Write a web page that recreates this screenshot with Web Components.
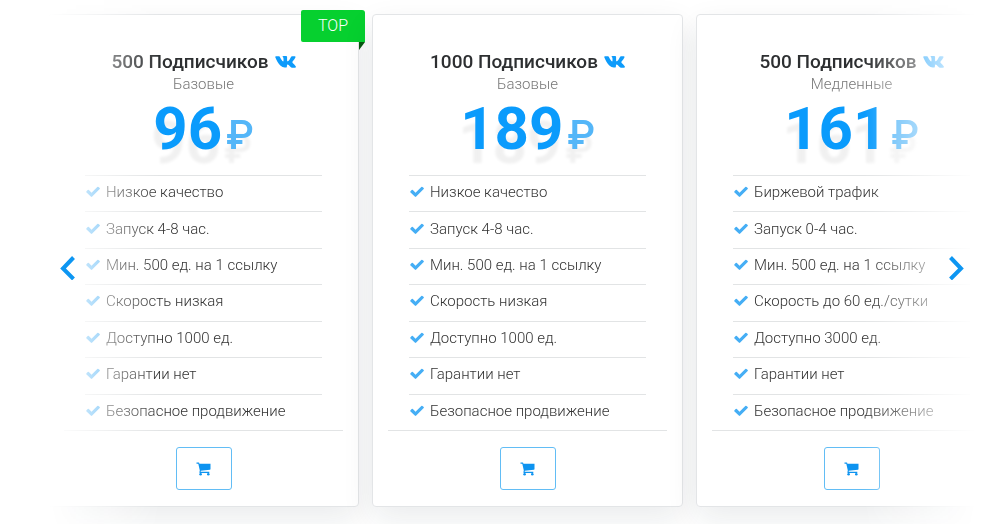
<!DOCTYPE html>
<html lang="ru">
<head>
<meta charset="utf-8">
<meta name="viewport" content="width=device-width, initial-scale=1">
<title>Тарифы</title>
<style>
  body { margin: 0; background: #fff; font-family: Roboto, "Liberation Sans", sans-serif; color: #444; }
</style>
</head>
<body>
<price-carousel>
  <price-card name="500 Подписчиков" kind="Базовые" price="96" badge="TOP">
    <price-feature>Низкое качество</price-feature>
    <price-feature>Запуск 4-8 час.</price-feature>
    <price-feature>Мин. 500 ед. на 1 ссылку</price-feature>
    <price-feature>Скорость низкая</price-feature>
    <price-feature>Доступно 1000 ед.</price-feature>
    <price-feature>Гарантии нет</price-feature>
    <price-feature>Безопасное продвижение</price-feature>
  </price-card>
  <price-card name="1000 Подписчиков" kind="Базовые" price="189">
    <price-feature>Низкое качество</price-feature>
    <price-feature>Запуск 4-8 час.</price-feature>
    <price-feature>Мин. 500 ед. на 1 ссылку</price-feature>
    <price-feature>Скорость низкая</price-feature>
    <price-feature>Доступно 1000 ед.</price-feature>
    <price-feature>Гарантии нет</price-feature>
    <price-feature>Безопасное продвижение</price-feature>
  </price-card>
  <price-card name="500 Подписчиков" kind="Медленные" price="161">
    <price-feature>Биржевой трафик</price-feature>
    <price-feature>Запуск 0-4 час.</price-feature>
    <price-feature>Мин. 500 ед. на 1 ссылку</price-feature>
    <price-feature>Скорость до 60 ед./сутки</price-feature>
    <price-feature>Доступно 3000 ед.</price-feature>
    <price-feature>Гарантии нет</price-feature>
    <price-feature>Безопасное продвижение</price-feature>
  </price-card>
</price-carousel>

<script>
class PriceCarousel extends HTMLElement {
  constructor() {
    super();
    this.attachShadow({ mode: 'open' }).innerHTML = `
      <style>
        :host { display: block; position: relative; padding: 0 22px 0 48px; }
        .view {
          overflow: hidden; padding: 14px 0 17px;
          -webkit-mask-image: linear-gradient(to right, transparent, #000 112px, #000 calc(100% - 112px), transparent);
          mask-image: linear-gradient(to right, transparent, #000 112px, #000 calc(100% - 112px), transparent);
        }
        .track { display: grid; grid-template-columns: repeat(3, 1fr); gap: 13px; margin-right: -31px; }
        button {
          position: absolute; top: 256px; width: 16px; height: 24px; padding: 0;
          border: 0; background: none; cursor: pointer;
        }
        .prev { left: 60px; }
        .next { right: 34px; }
        svg { display: block; width: 16px; height: 24px; fill: none; stroke: #0d96f2; stroke-width: 4; }
      </style>
      <div class="view"><div class="track"><slot></slot></div></div>
      <button class="prev" aria-label="Назад"><svg viewBox="0 0 16 24"><path d="M13.5 1.5 3 12.500 13.500 23"/></svg></button>
      <button class="next" aria-label="Вперёд"><svg viewBox="0 0 16 24"><path d="M2.500 1.500 13 12.500 2.500 23"/></svg></button>`;
  }
}

class PriceFeature extends HTMLElement {
  constructor() {
    super();
    this.attachShadow({ mode: 'open' }).innerHTML = `
      <style>
        :host { display: flex; align-items: center; gap: 6px; padding: 0 1px 3px; border-top: 1px solid #e2e4e5; font-size: 15px; font-weight: 300; line-height: 20px; color: #333; }
        svg { width: 14px; height: 12px; flex: none; fill: #45aef5; }
      </style>
      <svg viewBox="0 0 14 12" aria-hidden="true"><path d="M13.700 2.900 6.200 10.600Q5.500 11.200 4.800 10.600L.5 6.500Q0 5.900.5 5.300L1.700 4.100Q2.300 3.600 2.900 4.100L5.500 6.700 11.300.9Q11.900.4 12.500.9L13.700 2Q14.100 2.500 13.700 2.900Z"/></svg>
      <span><slot></slot></span>`;
  }
}

class PriceCard extends HTMLElement {
  connectedCallback() {
    if (this.shadowRoot) return;
    const badge = this.getAttribute('badge');
    this.attachShadow({ mode: 'open' }).innerHTML = `
      <style>
        :host {
          display: flex; flex-direction: column; align-items: stretch; position: relative; box-sizing: border-box;
          padding: 35px 15px 16px; background: #fff; border: 1px solid #e3e5e7; border-radius: 4px;
          box-shadow: 0 12px 32px rgba(20, 40, 50, .09); text-align: center;
        }
        h2 { display: flex; justify-content: center; align-items: center; gap: 6px; margin: 0; font-size: 19px; font-weight: 500; line-height: 24px; color: #2d2f31; }
        .vk { width: 21px; height: 12px; fill: #0d9bfb; }
        .kind { margin: 0; font-size: 15px; font-weight: 300; line-height: 20px; color: #777; }
        .price { margin: 0 0 11px; font-size: 60px; font-weight: 700; line-height: 70px; color: #0a9bfc; text-shadow: -2px 14px 3px rgba(0, 0, 0, .06); }
        .price small { margin-left: 4px; font-size: 40px; font-weight: 500; line-height: 40px; color: #54b6f8; }
        .list { display: grid; grid-auto-rows: 1fr; min-height: 255px; margin: 0 21px; }
        .foot { border-top: 1px solid #e2e4e5; padding-top: 16px; }
        button { display: inline-flex; align-items: center; justify-content: center; width: 56px; height: 43px; padding: 0; border: 1px solid #62bdf5; border-radius: 3px; background: #fff; cursor: pointer; vertical-align: top; }
        .cart { width: 15px; height: 14px; fill: #0d93f0; }
        .badge { position: absolute; top: -5px; right: -7px; width: 64px; border-radius: 2px 3px 0 2px; background: #06d02f; color: #fff; font-size: 16px; font-weight: 300; line-height: 32px; }
        .badge::after { content: ""; position: absolute; right: 0; top: 100%; border-top: 8px solid #07570f; border-right: 6px solid transparent; }
      </style>
      ${badge ? `<div class="badge">${badge}</div>` : ''}
      <h2><span>${this.getAttribute('name')}</span>
        <svg class="vk" viewBox="0 0 21 12" aria-hidden="true"><path d="M10 11.600H11.300Q11.900 11.500 11.900 10.500C11.900 8.300 12.700 8 13.700 9.100C15 10.600 15.700 11.700 17.200 11.700H20Q21.300 11.500 20.700 10.300C20 8.900 18.700 7.800 17.700 6.900Q17.100 6.300 17.600 5.600C18.600 4.300 20 2.500 20.500 1.200Q20.700.3 19.800.3H17Q16.300.3 16 .9C15.300 2.300 14.400 3.900 13.300 4.900Q12.300 5.800 12.100 4.400V1.200Q12.200.1 11.100.1H8.400Q7.400.1 7.500.7C8.400 1.400 8.500 2 8.500 3.200V4.700Q8.400 6 7.400 5C6.300 3.700 5.500 2.300 4.900.9Q4.700.3 4 .3H1Q0 .4.3 1.300C1.500 4.300 3.200 7.400 5.300 9.500Q7.500 11.700 10 11.600Z"/></svg>
      </h2>
      <p class="kind">${this.getAttribute('kind')}</p>
      <p class="price">${this.getAttribute('price')}<small>₽</small></p>
      <div class="list"><slot></slot></div>
      <div class="foot">
        <button aria-label="Купить"><svg class="cart" viewBox="0 0 15 14"><path d="M.5.500H2.600Q3.300.5 3.400 1.700H14.500V7Q14.500 7.600 13.900 7.700L4.800 8.700 4.700 9.700H13.300V10.900H4Q3.300 10.800 3.400 10.200L3.800 8.500 2.300 1.700H.5Z"/><circle cx="4.600" cy="12.200" r="1.300"/><circle cx="12.300" cy="12.200" r="1.300"/></svg></button>
      </div>`;
  }
}

customElements.define('price-carousel', PriceCarousel);
customElements.define('price-feature', PriceFeature);
customElements.define('price-card', PriceCard);
</script>
</body>
</html>
